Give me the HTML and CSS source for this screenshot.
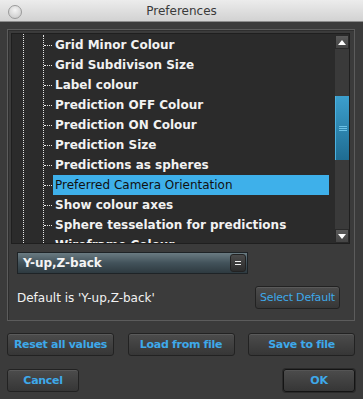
FILE: index.html
```html
<!DOCTYPE html>
<html lang="en">

<head>
    <meta charset="utf-8">
    <title>Preferences</title>
    <link rel="stylesheet" href="styles.css">
</head>

<body>
    <div class="window">
        <header class="titlebar">
            <span class="close"></span>
            <h1>Preferences</h1>
        </header>

        <main class="content">
            <section class="group">
                <div class="list">
                    <div class="tree">
                        <div class="branch">
                            <div class="row"><span>Grid Minor Colour</span></div>
                            <div class="row"><span>Grid Subdivison Size</span></div>
                            <div class="row"><span>Label colour</span></div>
                            <div class="row"><span>Prediction OFF Colour</span></div>
                            <div class="row"><span>Prediction ON Colour</span></div>
                            <div class="row"><span>Prediction Size</span></div>
                            <div class="row"><span>Predictions as spheres</span></div>
                            <div class="row selected"><span>Preferred Camera Orientation</span></div>
                            <div class="row"><span>Show colour axes</span></div>
                            <div class="row"><span>Sphere tesselation for predictions</span></div>
                            <div class="row"><span>Wireframe Colour</span></div>
                        </div>
                    </div>
                    <div class="scrollbar">
                        <div class="arrow up">
                            <svg width="8" height="5" viewBox="0 0 8 5"><path d="M0 5 L4 0 L8 5 Z" fill="#fff"/></svg>
                        </div>
                        <div class="track">
                            <div class="thumb"><i></i><i></i><i></i></div>
                        </div>
                        <div class="arrow down">
                            <svg width="8" height="5" viewBox="0 0 8 5"><path d="M0 0 L4 5 L8 0 Z" fill="#fff"/></svg>
                        </div>
                    </div>
                </div>

                <div class="combo">
                    <span class="value">Y-up,Z-back</span>
                    <span class="drop"><i></i><i></i></span>
                </div>

                <div class="default-row">
                    <span class="default-label">Default is 'Y-up,Z-back'</span>
                    <button class="btn plain">Select Default</button>
                </div>
            </section>

            <div class="actions">
                <button class="btn wide">Reset all values</button>
                <button class="btn wide">Load from file</button>
                <button class="btn wide">Save to file</button>
            </div>

            <div class="actions">
                <button class="btn small">Cancel</button>
                <button class="btn small ok">OK</button>
            </div>
        </main>
    </div>
</body>

</html>
```

FILE: styles.css
```css
body {
    margin: 0;
    font-family: "DejaVu Sans", sans-serif;
    background-color: #3b3b3b;
}

.window {
    width: 363px;
    height: 399px;
    background-color: #3b3b3b;
    overflow: hidden;
}

.titlebar {
    height: 22px;
    display: flex;
    align-items: center;
    justify-content: center;
    position: relative;
    background: linear-gradient(#ececec, #d2d2d2);
    border-bottom: 1px solid #8c8c8c;
    box-sizing: border-box;
}

.titlebar h1 {
    margin: 0;
    font-size: 12px;
    font-weight: normal;
    color: #3a3a3a;
}

.close {
    position: absolute;
    left: 8px;
    top: 5px;
    width: 12px;
    height: 12px;
    border-radius: 50%;
    border: 1px solid #9a9a9a;
    background: radial-gradient(circle at 50% 35%, #f4f4f4, #c4c4c4);
}

.content {
    padding: 7px 8px 0 7px;
}

.group {
    border: 1px solid #5c5c5c;
    box-shadow: inset 1px 1px 0 #2e2e2e;
    padding: 3px 4px 11px 3px;
}

.list {
    height: 211px;
    display: flex;
    background-color: #2b2b2b;
    border: 1px solid #1f1f1f;
    box-sizing: border-box;
    overflow: hidden;
}

.tree {
    flex: 1;
    margin-left: 11px;
    border-left: 1px dotted #e6e6e6;
    padding-top: 1px;
}

.branch {
    margin-left: 19px;
    border-left: 1px dotted #e6e6e6;
    padding-right: 6px;
}

.row {
    height: 20px;
    display: flex;
    align-items: center;
    padding-left: 9px;
    position: relative;
    white-space: nowrap;
}

.row::before {
    content: "";
    position: absolute;
    left: 0;
    top: 10px;
    width: 8px;
    border-top: 1px dotted #e6e6e6;
}

.row span {
    flex: 1;
    height: 20px;
    line-height: 20px;
    padding-left: 2px;
    font-size: 12px;
    font-weight: bold;
    color: #f2f2f2;
}

.row.selected span {
    background-color: #3eb0ea;
    color: #111;
    font-weight: normal;
}

.scrollbar {
    width: 14px;
    margin: 1px 0 0;
    display: flex;
    flex-direction: column;
    background-color: #3a3a3a;
}

.arrow {
    height: 14px;
    display: flex;
    align-items: center;
    justify-content: center;
    background: linear-gradient(#5a5a5a, #444);
    border: 1px solid #2a2a2a;
    box-sizing: border-box;
}

.track {
    flex: 1;
    padding-top: 47px;
    padding-bottom: 69px;
}

.thumb {
    height: 100%;
    display: flex;
    flex-direction: column;
    align-items: center;
    justify-content: center;
    gap: 1px;
    background: linear-gradient(#3c9fcd, #1f6c92);
    border-left: 1px solid #4cb2e0;
}

.thumb i {
    width: 8px;
    height: 1px;
    background-color: #6cc2e6;
}

.combo {
    margin: 8px 0 0 6px;
    width: 231px;
    height: 22px;
    display: flex;
    align-items: center;
    justify-content: space-between;
    box-sizing: border-box;
    border: 1px solid #1e2326;
    background: linear-gradient(#6a7b82, #42525a 50%, #2e3a40);
    padding: 0 1px 0 5px;
}

.combo .value {
    font-size: 12px;
    font-weight: bold;
    color: #f4f4f4;
}

.drop {
    width: 16px;
    height: 18px;
    border-radius: 3px;
    background: linear-gradient(#4a4a4a, #2c2c2c);
    border: 1px solid #222;
    box-sizing: border-box;
    display: flex;
    flex-direction: column;
    align-items: center;
    justify-content: center;
    gap: 2px;
}

.drop i {
    width: 6px;
    height: 1px;
    background-color: #eee;
}

.default-row {
    display: flex;
    justify-content: space-between;
    align-items: center;
    margin: 12px 10px 0 6px;
}

.default-label {
    font-size: 12px;
    color: #f2f2f2;
}

.btn {
    height: 23px;
    padding: 0;
    border: 1px solid #222;
    border-radius: 3px;
    background: linear-gradient(#4c4c4c, #363636);
    box-shadow: inset 0 1px 0 #5a5a5a;
    color: #3ea9ea;
    font-family: "DejaVu Sans", sans-serif;
    font-size: 11px;
    font-weight: bold;
    letter-spacing: -0.3px;
    white-space: nowrap;
}

.btn.plain {
    width: 85px;
    font-weight: normal;
    letter-spacing: -0.2px;
}

.actions {
    display: flex;
    justify-content: space-between;
    margin-top: 12px;
}

.actions + .actions {
    margin-top: 13px;
}

.btn.wide {
    width: 107px;
}

.btn.small {
    width: 72px;
}

.btn.ok {
    border-color: #141414;
    box-shadow: inset 0 1px 0 #555, 0 0 0 1px #2a2a2a;
}
```
